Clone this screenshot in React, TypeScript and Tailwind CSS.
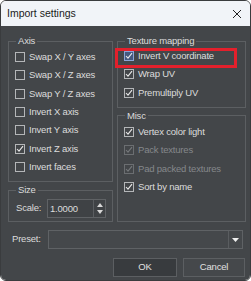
import React from "react";

const font = { fontFamily: '"Liberation Sans", Arial, sans-serif' };

type BoxProps = { checked?: boolean; disabled?: boolean; focused?: boolean };

const CheckBox: React.FC<BoxProps> = ({ checked, disabled, focused }) => {
  const border = focused ? "border-[#8aa4d6] bg-[#44597f]" : disabled ? "border-[#6b6e71]" : "border-[#b4b6b8]";
  const stroke = disabled ? "#75787b" : "#e8e8e8";
  return (
    <span className={`w-[10px] h-[10px] border ${border} flex items-center justify-center shrink-0`}>
      {checked && (
        <svg width="8" height="8" viewBox="0 0 8 8">
          <polyline points="1,4 3,6.2 7,1.2" fill="none" stroke={stroke} strokeWidth="1.1" />
        </svg>
      )}
    </span>
  );
};

const Row: React.FC<BoxProps & { label: string }> = ({ label, ...box }) => (
  <div className="h-[18.3px] flex items-center gap-[4px]">
    <CheckBox {...box} />
    <span className={box.disabled ? "text-[#85888b]" : "text-[#dcdcdc]"}>{label}</span>
  </div>
);

const Group: React.FC<{ title: string; className?: string; children: React.ReactNode }> = ({
  title,
  className = "",
  children,
}) => (
  <fieldset className={`border border-[#5c5f62] px-[6px] ${className}`}>
    <legend className="px-[2px] ml-[1px] leading-[12px] text-[#dcdcdc]">{title}</legend>
    {children}
  </fieldset>
);

export default function App() {
  return (
    <div className="w-[251px] h-[281px] bg-white" style={font}>
      <div className="w-[251px] h-[281px] rounded-[6px] overflow-hidden border border-[#3a3c3e] flex flex-col">
        {/* Title bar */}
        <div className="h-[25px] bg-[#f1f4f8] flex items-center justify-between pl-[6px] pr-[8px] shrink-0">
          <span className="text-[10.5px] text-[#1b1b1b]">Import settings</span>
          <svg width="10" height="10" viewBox="0 0 10 10">
            <path d="M1 1 L9 9 M9 1 L1 9" stroke="#222" strokeWidth="1" />
          </svg>
        </div>

        {/* Body */}
        <div className="flex-1 bg-[#434649] text-[9.5px] tracking-[-0.2px] pt-[9px] pl-[7px] pr-[4px] relative">
          <div className="flex gap-[4px]">
            <div className="w-[105px] flex flex-col gap-[2px]">
              <Group title="Axis" className="pt-[1px] pb-[5px]">
                <Row label="Swap X / Y axes" />
                <Row label="Swap X / Z axes" />
                <Row label="Swap Y / Z axes" />
                <Row label="Invert X axis" />
                <Row label="Invert Y axis" />
                <Row label="Invert Z axis" checked />
                <Row label="Invert faces" />
              </Group>
              <Group title="Size" className="pt-[3px] pb-[3px]">
                <div className="flex items-center justify-between">
                  <span className="text-[#dcdcdc] pl-[1px]">Scale:</span>
                  <div className="w-[59px] h-[19px] border border-[#5f6265] bg-[#3f4245] flex">
                    <span className="flex-1 pl-[2px] text-[#dcdcdc] leading-[17px]">1.0000</span>
                    <div className="w-[12px] border-l border-[#5a5d60] flex flex-col items-center justify-center gap-[3px]">
                      <svg width="6" height="4" viewBox="0 0 6 4">
                        <path d="M0 4 L3 0 L6 4 Z" fill="#d8d8d8" />
                      </svg>
                      <svg width="6" height="4" viewBox="0 0 6 4">
                        <path d="M0 0 L3 4 L6 0 Z" fill="#d8d8d8" />
                      </svg>
                    </div>
                  </div>
                </div>
              </Group>
            </div>

            <div className="w-[129px] flex flex-col gap-[2px]">
              <Group title="Texture mapping" className="pt-[0px] pb-[5px]">
                <Row label="Invert V coordinate" checked focused />
                <Row label="Wrap UV" checked />
                <Row label="Premultiply UV" checked />
              </Group>
              <Group title="Misc" className="flex-1 pt-[1px]">
                <Row label="Vertex color light" checked />
                <Row label="Pack textures" checked disabled />
                <Row label="Pad packed textures" checked disabled />
                <Row label="Sort by name" checked />
              </Group>
            </div>
          </div>

          {/* Preset */}
          <div className="flex items-center mt-[8px] gap-[7px] pr-[3px]">
            <span className="text-[#dcdcdc] pl-[4px]">Preset:</span>
            <div className="flex-1 h-[19px] border border-[#5f6265] bg-[#45484b] flex justify-end">
              <div className="w-[14px] border-l border-[#5a5d60] flex items-center justify-center">
                <svg width="7" height="4" viewBox="0 0 7 4">
                  <path d="M0 0 L3.5 4 L7 0 Z" fill="#f0f0f0" />
                </svg>
              </div>
            </div>
          </div>

          {/* Buttons */}
          <div className="flex justify-end gap-[6px] mt-[9px] pr-[1px]">
            <button className="w-[64px] h-[19px] border border-[#5c5f62] bg-[#383b3e] text-[#e0e0e0]">OK</button>
            <button className="w-[62px] h-[19px] border border-[#5c5f62] bg-[#45484b] text-[#e0e0e0]">Cancel</button>
          </div>

          {/* Highlight annotation */}
          <div className="absolute left-[114px] top-[22px] w-[122px] h-[20px] border-[3px] border-[#e3202c]" />
        </div>
      </div>
    </div>
  );
}
